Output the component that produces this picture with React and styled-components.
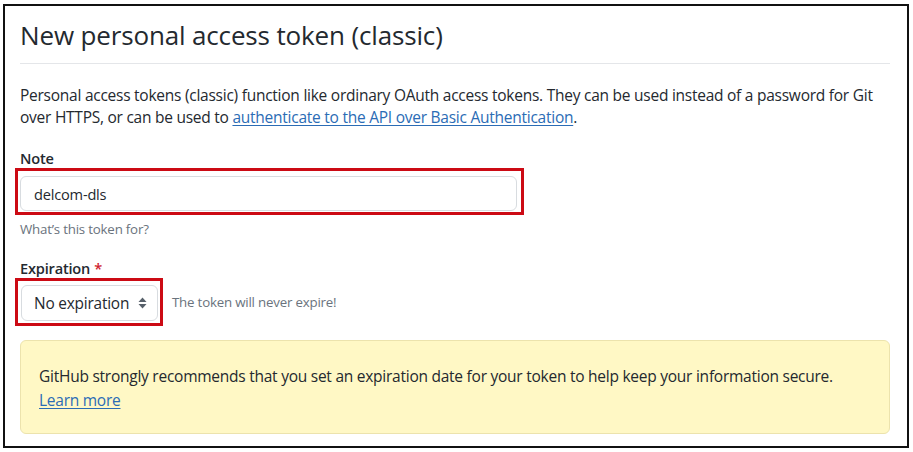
import styled, { createGlobalStyle } from "styled-components";

const GlobalStyle = createGlobalStyle`
  html, body {
    margin: 0;
    padding: 0;
    background: #ffffff;
  }
  body {
    font-family: "Open Sans", "Noto Sans", Arial, sans-serif;
    color: #24292f;
  }
  * {
    box-sizing: border-box;
  }
`;

const Frame = styled.div`
  width: 906px;
  height: 444px;
  margin: 4px 0 0 3px;
  padding: 10px 17px 0 15px;
  border: 2px solid #111;
  background: #fff;
  display: flex;
  flex-direction: column;
`;

const Title = styled.h2`
  margin: 0;
  padding-bottom: 9px;
  font-size: 26px;
  font-weight: 400;
  line-height: 38px;
  letter-spacing: -0.15px;
  border-bottom: 1px solid #e4e6e9;
`;

const Intro = styled.p`
  margin: 20px 0 0;
  font-size: 15.5px;
  line-height: 22px;
  letter-spacing: -0.25px;
`;

const Link = styled.a`
  color: #2b6cb5;
  text-decoration: underline;
  text-underline-offset: 2px;
`;

const Group = styled.div`
  margin-top: ${(p) => p.$top || 0}px;
  display: flex;
  flex-direction: column;
`;

const Label = styled.label`
  font-size: 14.6px;
  font-weight: 600;
  line-height: 20px;
  letter-spacing: -0.2px;
`;

const Required = styled.span`
  color: #cf222e;
  margin-left: 4px;
`;

const Highlight = styled.div`
  align-self: flex-start;
  margin-left: -5px;
  border: 3px solid #cc0a14;
  padding: ${(p) => p.$pad};
`;

const Input = styled.input`
  display: block;
  width: 497px;
  height: 35px;
  padding: 0 13px;
  font-family: inherit;
  font-size: 14.6px;
  color: #24292f;
  border: 1px solid #d8dce0;
  border-radius: 6px;
  background: #fff;
  outline: none;
  letter-spacing: -0.2px;
`;

const Note = styled.div`
  margin-top: ${(p) => p.$top || 0}px;
  font-size: 13.3px;
  color: #6a737d;
  letter-spacing: -0.2px;
`;

const Row = styled.div`
  display: flex;
  align-items: center;
  gap: 9px;
`;

const Select = styled.div`
  width: 137px;
  height: 36px;
  padding: 0 10px 0 12px;
  display: flex;
  align-items: center;
  justify-content: space-between;
  border: 1px solid #d8dce0;
  border-radius: 6px;
  font-size: 15.4px;
  letter-spacing: -0.2px;
`;

const Flash = styled.div`
  margin-top: 14px;
  height: 94px;
  padding: 23px 18px 0;
  background: #fff8c5;
  border: 1px solid #ece3ad;
  border-radius: 6px;
  font-size: 15.5px;
  line-height: 24px;
  letter-spacing: -0.25px;
`;

const Arrows = () => (
  <svg width="9" height="14" viewBox="0 0 9 14">
    <path d="M4.5 1.5 L8.5 6 H0.5 Z" fill="#57606a" />
    <path d="M4.5 12.5 L8.5 8 H0.5 Z" fill="#57606a" />
  </svg>
);

export default function App() {
  return (
    <>
      <GlobalStyle />
      <Frame>
        <Title>New personal access token (classic)</Title>
        <Intro>
          Personal access tokens (classic) function like ordinary OAuth access
          tokens. They can be used instead of a password for Git over HTTPS, or
          can be used to{" "}
          <Link href="#">authenticate to the API over Basic Authentication</Link>
          .
        </Intro>

        <Group $top={20}>
          <Label>Note</Label>
          <Highlight $pad="5px 4px 1px 2px">
            <Input defaultValue="delcom-dls" />
          </Highlight>
          <Note $top={5}>What’s this token for?</Note>
        </Group>

        <Group $top={20}>
          <Label>
            Expiration<Required>*</Required>
          </Label>
          <Row>
            <Highlight $pad="4px 2px 2px 3px">
              <Select>
                No expiration
                <Arrows />
              </Select>
            </Highlight>
            <Note>The token will never expire!</Note>
          </Row>
        </Group>

        <Flash>
          GitHub strongly recommends that you set an expiration date for your
          token to help keep your information secure.
          <br />
          <Link href="#">Learn more</Link>
        </Flash>
      </Frame>
    </>
  );
}
